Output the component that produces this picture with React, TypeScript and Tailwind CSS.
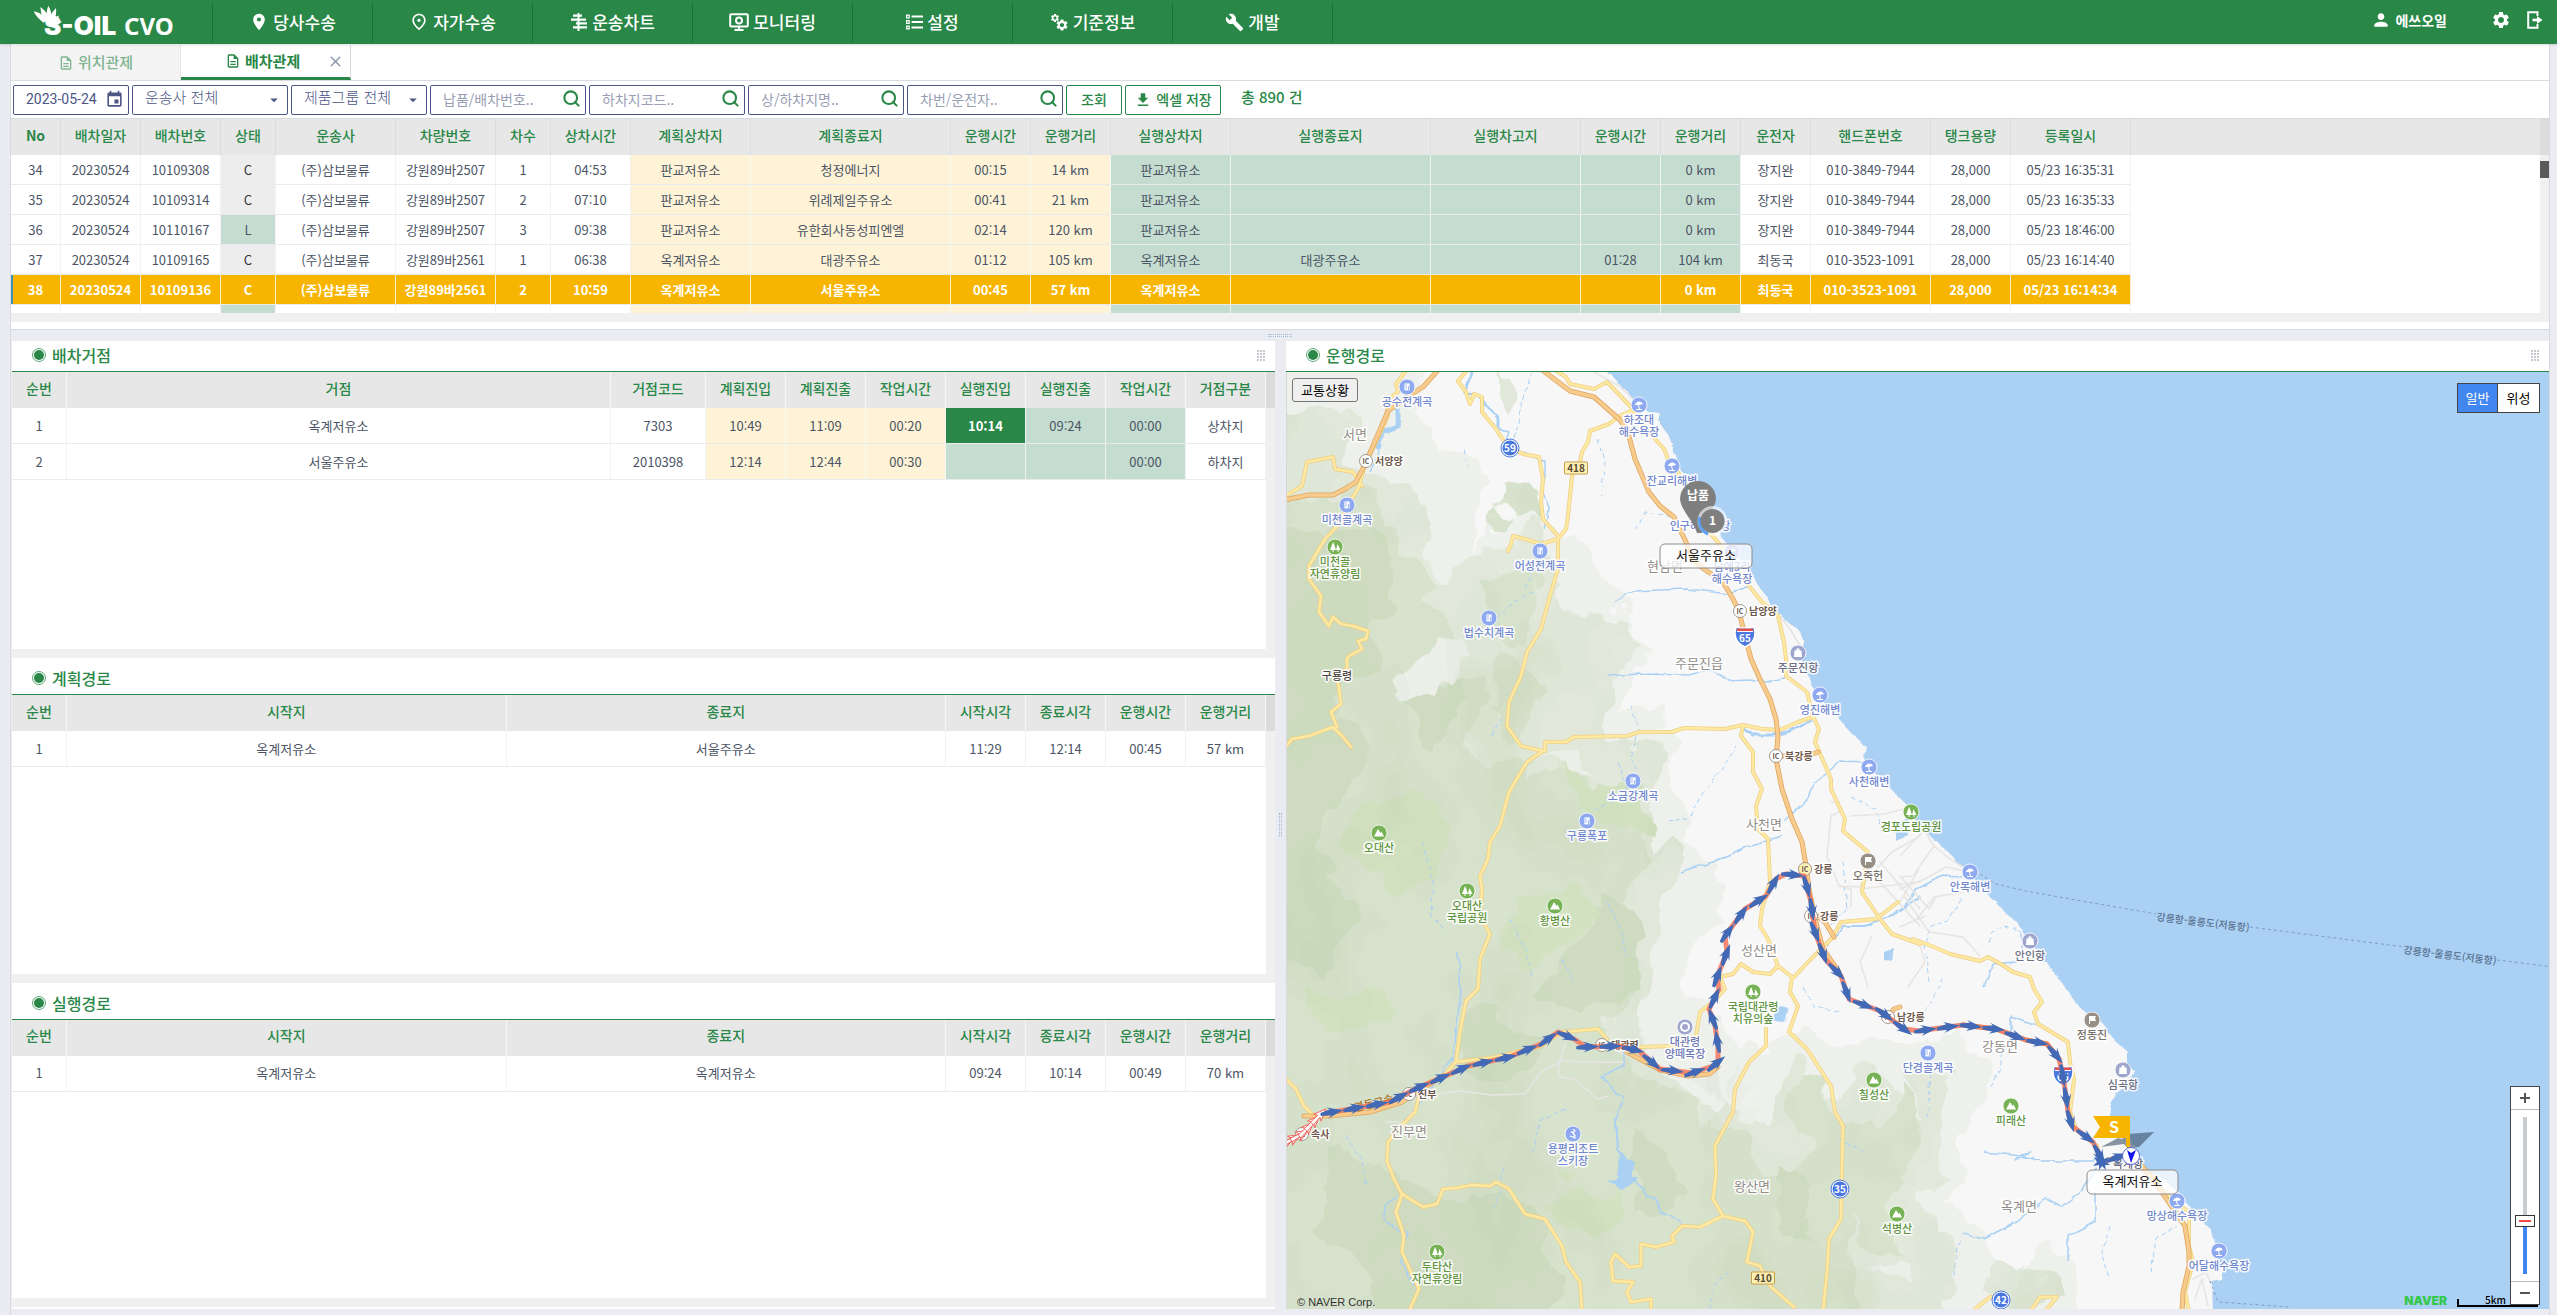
import React from "react";
import { Search, X } from "lucide-react";
import {
  MdArrowDropDown,
  MdBuild,
  MdEvent,
  MdFileDownload,
  MdOutlineDescription,
  MdOutlinePlace,
  MdPerson,
  MdPlace,
  MdSettings,
} from "react-icons/md";

/* ------------------------------------------------------------------ */
/* Header                                                             */
/* ------------------------------------------------------------------ */

function Logo() {
  const petals = [-150, -126, -102, -78, -54, -30];
  return (
    <a href="#" aria-label="S-OIL CVO" className="relative flex h-11 w-[212px] shrink-0 items-end pb-1 pl-11 text-white">
      <svg viewBox="0 0 36 26" className="absolute top-1 left-7 h-[26px] w-9" fill="#fff" aria-hidden="true">
        {petals.map((a, i) => (
          <path
            key={a}
            transform={`translate(19 21) rotate(${a + 168}) scale(${i > 3 ? 0.8 : 1})`}
            d="M-2 -4C-5 -7 -8 -10 -17 -9C-13 -5 -9 -3 -4 -1Z"
          />
        ))}
      </svg>
      <span className="font-['Inter'] text-[26px] leading-7 font-black">S-OIL</span>
      <span className="ml-2 font-['Noto_Sans'] text-[24px] leading-7 font-bold">CVO</span>
    </a>
  );
}

function ChartIcon() {
  return (
    <svg viewBox="0 0 18 18" className="size-[18px]" fill="none" stroke="currentColor" strokeWidth="2.2">
      <path d="M8.5 0v18" strokeWidth="2" />
      <path d="M3 2.6h9M1 6.6h9M6 10.4h11M3 14.4h8M6 6.6h10M8 14.4h9" />
    </svg>
  );
}

function MonitorIcon() {
  return (
    <svg viewBox="0 0 20 18" className="h-[18px] w-5" fill="none" stroke="currentColor" strokeWidth="2">
      <rect x="1.2" y="1.2" width="17.6" height="12.4" rx="1" />
      <circle cx="10" cy="7.4" r="3" />
      <path d="M5.5 17h9M10 13v4" />
    </svg>
  );
}

function ListIcon() {
  return (
    <svg viewBox="0 0 17 16" className="h-4 w-[17px]" fill="none" stroke="currentColor">
      <path d="M5.5 2.5H17M5.5 8H17M5.5 13.5H17" strokeWidth="2.2" />
      <path d="M.6 1.2h2.6v2.6H.6zM.6 6.7h2.6v2.6H.6zM.6 12.2h2.6v2.6H.6z" strokeWidth="1.2" />
    </svg>
  );
}

function GearsIcon() {
  return (
    <span className="relative block size-[19px]">
      <MdSettings className="absolute top-0 left-0 size-[10px]" />
      <MdSettings className="absolute right-0 bottom-0 size-[14px]" />
    </span>
  );
}

function ExitIcon() {
  return (
    <svg viewBox="0 0 16 18" className="h-[18px] w-4" fill="none" stroke="currentColor" strokeWidth="2">
      <path d="M10.5 5V1.2H1.2v15.6h9.3V13" />
      <path d="M5.5 9H11" strokeWidth="2.6" />
      <path d="M10 5v8l5.5-4z" fill="currentColor" stroke="none" />
    </svg>
  );
}

const menus = [
  { label: "당사수송", icon: <MdPlace className="size-5" /> },
  { label: "자가수송", icon: <MdOutlinePlace className="size-5" /> },
  { label: "운송차트", icon: <ChartIcon /> },
  { label: "모니터링", icon: <MonitorIcon /> },
  { label: "설정", icon: <ListIcon /> },
  { label: "기준정보", icon: <GearsIcon /> },
  { label: "개발", icon: <MdBuild className="size-[19px]" /> },
];

function Header() {
  return (
    <header className="z-10 flex h-11 shrink-0 items-center bg-[#298747] text-white shadow">
      <Logo />
      <nav className="flex h-[39px] border-l border-[#217039]">
        {menus.map((m) => (
          <a
            key={m.label}
            href="#"
            className="flex w-40 items-center justify-center gap-1 border-r border-[#217039] text-[17px] font-medium"
          >
            {m.icon}
            <span>{m.label}</span>
          </a>
        ))}
      </nav>
      <div className="ml-auto flex items-center pr-3.5 pb-1">
        <MdPerson className="size-5" />
        <span className="ml-1 text-[14px] font-bold">에쓰오일</span>
        <button type="button" aria-label="환경설정" className="ml-11">
          <MdSettings className="size-5" />
        </button>
        <button type="button" aria-label="로그아웃" className="ml-4">
          <ExitIcon />
        </button>
      </div>
    </header>
  );
}

/* ------------------------------------------------------------------ */
/* Tabs and search bar                                                */
/* ------------------------------------------------------------------ */

function Tabs() {
  return (
    <div className="flex h-9 shrink-0 border-b border-[#d9dbe0] text-[15px] font-medium">
      <button type="button" className="flex w-[170px] items-center justify-center gap-1 border-r border-[#e6e6e6] bg-[#f4f4f4] text-[#7fb591]">
        <MdOutlineDescription className="size-4" />
        위치관제
      </button>
      <div className="flex w-[170px] items-center border-r border-b-3 border-r-[#d9dbe0] border-b-[#298747] pr-1.5 pl-11">
        <button type="button" className="flex items-center gap-1 font-bold text-[#298747]">
          <MdOutlineDescription className="size-4" />
          배차관제
        </button>
        <button type="button" aria-label="닫기" className="ml-auto text-[#9298ad]">
          <X className="size-[17px]" strokeWidth={2.2} />
        </button>
      </div>
    </div>
  );
}

const boxed = "flex h-[30px] items-center rounded-[2px] border border-[#4b5685] bg-white";

function DropDown({ label, wide }: { label: string; wide?: boolean }) {
  return (
    <div className={`relative ${wide ? "w-[156px]" : "w-[136px]"} ${boxed}`}>
      <select aria-label={label} className="h-full w-full appearance-none bg-transparent pb-1 pl-3 text-[15px] font-light text-[#4b5685] outline-none">
        <option>{label}</option>
      </select>
      <MdArrowDropDown className="pointer-events-none absolute right-1 size-[18px] text-[#4b5685]" />
    </div>
  );
}

function SearchBox({ hint }: { hint: string }) {
  return (
    <div className={`w-[156px] ${boxed}`}>
      <input aria-label={hint} placeholder={hint} className="min-w-0 flex-1 pl-3 text-[14px] text-[#4b5685] outline-none placeholder:text-[#989eb4]" />
      <button type="button" aria-label="검색" className="pr-1 pb-0.5 text-[#298747]">
        <Search className="size-[19px]" strokeWidth={2.6} />
      </button>
    </div>
  );
}

function SearchBar() {
  const button = "flex h-[30px] items-center justify-center gap-1 rounded-[2px] border border-[#298747] text-[14px] font-medium text-[#298747]";
  return (
    <form className="flex h-[37px] shrink-0 items-center gap-[3px] pl-0.5" onSubmit={(e) => e.preventDefault()}>
      <div className={`w-[116px] justify-between pr-1 pl-3 ${boxed}`}>
        <input aria-label="배차일자" defaultValue="2023-05-24" className="w-[78px] font-['Roboto'] text-[14px] text-[#4b5685] outline-none" />
        <MdEvent className="size-[19px] shrink-0 text-[#4b5685]" />
      </div>
      <DropDown label="운송사 전체" wide />
      <DropDown label="제품그룹 전체" />
      <SearchBox hint="납품/배차번호.." />
      <SearchBox hint="하차지코드.." />
      <SearchBox hint="상/하차지명.." />
      <SearchBox hint="차번/운전자.." />
      <button type="submit" className={`w-14 ${button}`}>조회</button>
      <button type="button" className={`w-24 ${button}`}>
        <MdFileDownload className="size-[18px]" />
        엑셀 저장
      </button>
      <p className="pb-1 pl-[17px] text-[15px] font-medium text-[#298747]">총 890 건</p>
    </form>
  );
}

/* ------------------------------------------------------------------ */
/* Dispatch list                                                      */
/* ------------------------------------------------------------------ */

const dispatchColumns: [string, string][] = [
  ["No", "w-[50px]"],
  ["배차일자", "w-20"],
  ["배차번호", "w-20"],
  ["상태", "w-[55px]"],
  ["운송사", "w-[120px]"],
  ["차량번호", "w-[100px]"],
  ["차수", "w-[55px]"],
  ["상차시간", "w-20"],
  ["계획상차지", "w-[120px]"],
  ["계획종료지", "w-[200px]"],
  ["운행시간", "w-20"],
  ["운행거리", "w-20"],
  ["실행상차지", "w-[120px]"],
  ["실행종료지", "w-[200px]"],
  ["실행차고지", "w-[150px]"],
  ["운행시간", "w-20"],
  ["운행거리", "w-20"],
  ["운전자", "w-[70px]"],
  ["핸드폰번호", "w-[120px]"],
  ["탱크용량", "w-20"],
  ["등록일시", "w-[120px]"],
];

const dispatchRows: string[][] = [
  ["34", "20230524", "10109308", "C", "(주)삼보물류", "강원89바2507", "1", "04:53", "판교저유소", "청정에너지", "00:15", "14 km", "판교저유소", "", "", "", "0 km", "장지완", "010-3849-7944", "28,000", "05/23 16:35:31"],
  ["35", "20230524", "10109314", "C", "(주)삼보물류", "강원89바2507", "2", "07:10", "판교저유소", "위례제일주유소", "00:41", "21 km", "판교저유소", "", "", "", "0 km", "장지완", "010-3849-7944", "28,000", "05/23 16:35:33"],
  ["36", "20230524", "10110167", "L", "(주)삼보물류", "강원89바2507", "3", "09:38", "판교저유소", "유한회사동성피엔엘", "02:14", "120 km", "판교저유소", "", "", "", "0 km", "장지완", "010-3849-7944", "28,000", "05/23 18:46:00"],
  ["37", "20230524", "10109165", "C", "(주)삼보물류", "강원89바2561", "1", "06:38", "옥계저유소", "대광주유소", "01:12", "105 km", "옥계저유소", "대광주유소", "", "01:28", "104 km", "최동국", "010-3523-1091", "28,000", "05/23 16:14:40"],
  ["38", "20230524", "10109136", "C", "(주)삼보물류", "강원89바2561", "2", "10:59", "옥계저유소", "서울주유소", "00:45", "57 km", "옥계저유소", "", "", "", "0 km", "최동국", "010-3523-1091", "28,000", "05/23 16:14:34"],
  ["", "", "", "L", "", "", "", "", "", "", "", "", "", "", "", "", "", "", "", "", ""],
];

function dispatchCell(col: number, value: string, selected: boolean) {
  if (selected) return "border-white/80 bg-[#f8b500] text-white font-bold";
  if (col === 3) return value === "L" ? "border-[#f4f4f4] bg-[#c5dcd0]" : "border-[#f4f4f4] bg-[#ededed] text-[#333]";
  if (col >= 8 && col <= 11) return "border-[#f7f7f4] bg-[#fef3d6]";
  if (col >= 12 && col <= 16) return "border-[#eef3f0] bg-[#c5dcd0]";
  return "border-[#f1f2f4]";
}

function DispatchTable() {
  return (
    <div className="flex h-[204px] shrink-0 border-t border-[#d9dbe0]">
      <div className="flex min-w-0 flex-1 flex-col">
        <div className="relative min-h-0 flex-1 overflow-hidden">
          <div className="absolute inset-x-0 top-0 h-9 bg-[#e7e7e7]" />
          <table className="relative w-[2120px] table-fixed border-separate border-spacing-0 text-center text-[13px] text-[#4c5565]">
            <thead>
              <tr>
                {dispatchColumns.map(([name, width], i) => (
                  <th key={i} className={`${width} h-9 border-r border-[#d9dce0] bg-[#e7e7e7] pb-1 text-[14px] text-[#298747] ${i === 0 ? "font-bold" : "font-medium"}`}>
                    {name}
                  </th>
                ))}
              </tr>
            </thead>
            <tbody>
              {dispatchRows.map((row, r) => (
                <tr key={r}>
                  {row.map((value, c) => (
                    <td
                      key={c}
                      className={`h-[30px] overflow-hidden border-r border-b border-b-[#e9eaed] whitespace-nowrap ${dispatchCell(c, value, r === 4)} ${r === 4 && c === 0 ? "shadow-[inset_2px_0_0_#3f94b4]" : ""}`}
                    >
                      {r === 5 ? "" : value}
                    </td>
                  ))}
                </tr>
              ))}
            </tbody>
          </table>
        </div>
        <div className="h-[9px] shrink-0 bg-[#f0f0f0]" />
      </div>
      <div className="flex w-[9px] shrink-0 flex-col bg-[#f0f0f0]">
        <div className="h-9 bg-[#dcdcdc]" />
        <div className="mt-1.5 h-[17px] bg-[#5a5a5a]" />
      </div>
    </div>
  );
}

/* ------------------------------------------------------------------ */
/* Lower-left panels                                                  */
/* ------------------------------------------------------------------ */

type Tone = "plan" | "real" | "hot" | "";

interface Column {
  name: string;
  width: string;
  tone?: Tone;
}

const tones: Record<Tone, string> = {
  plan: "border-r-[#f7f7f4] bg-[#fef3d6]",
  real: "border-r-[#eef3f0] bg-[#c5dcd0]",
  hot: "border-r-[#eef3f0] bg-[#298747] text-white font-bold",
  "": "border-r-[#f1f2f4]",
};

function Bullet() {
  return (
    <span className="flex size-[14px] items-center justify-center rounded-full border border-[#5fa577]">
      <span className="size-[10px] rounded-full bg-[#298747]" />
    </span>
  );
}

function Grip() {
  return (
    <svg viewBox="0 0 8 11" className="h-[11px] w-2" fill="#c6c8ce" aria-hidden="true">
      {[0, 3, 6, 9].map((y) => [0, 3, 6].map((x) => <rect key={`${x}-${y}`} x={x} y={y} width="2" height="2" />))}
    </svg>
  );
}

function PanelTitle({ title, tall, grip }: { title: string; tall?: boolean; grip?: boolean }) {
  return (
    <div className={`flex shrink-0 items-center justify-between border-b border-[#298747] pr-2.5 pl-5 ${tall ? "h-[37px] pt-1" : "h-[31px] pb-0.5"}`}>
      <h2 className="flex items-center gap-1.5 text-[16px] leading-6 font-medium text-[#298747]">
        <Bullet />
        {title}
      </h2>
      {grip && <Grip />}
    </div>
  );
}

function GridPanel({ title, columns, rows, first }: { title: string; columns: Column[]; rows: string[][]; first?: boolean }) {
  return (
    <section className={`flex min-h-0 flex-col bg-white ${first ? "flex-[317]" : "flex-[324]"}`}>
      <PanelTitle title={title} tall={!first} grip={first} />
      <div className="flex min-h-0 flex-1">
        <div className="flex min-w-0 flex-1 flex-col">
          <div className="min-h-0 flex-1 overflow-hidden">
            <table className="w-full table-fixed border-separate border-spacing-0 text-center text-[13px] text-[#4c5565]">
              <thead>
                <tr>
                  {columns.map((c, i) => (
                    <th key={i} className={`${c.width} h-9 border-r border-[#f6f6f6] bg-[#e7e7e7] pb-1 text-[14px] font-medium text-[#298747]`}>
                      {c.name}
                    </th>
                  ))}
                </tr>
              </thead>
              <tbody>
                {rows.map((row, r) => (
                  <tr key={r}>
                    {row.map((value, c) => (
                      <td key={c} className={`h-9 border-r border-b border-b-[#e9eaed] ${value === "10:14" && columns[c].tone ? tones.hot : tones[columns[c].tone ?? ""]}`}>
                        {value}
                      </td>
                    ))}
                  </tr>
                ))}
              </tbody>
            </table>
          </div>
          <div className="h-[9px] shrink-0 bg-[#f0f0f0]" />
        </div>
        <div className="w-[9px] shrink-0 bg-[#f0f0f0]">
          <div className="h-9 bg-[#dcdcdc]" />
        </div>
      </div>
    </section>
  );
}

const stopColumns: Column[] = [
  { name: "순번", width: "w-[55px]" },
  { name: "거점", width: "" },
  { name: "거점코드", width: "w-[95px]" },
  { name: "계획진입", width: "w-20", tone: "plan" },
  { name: "계획진출", width: "w-20", tone: "plan" },
  { name: "작업시간", width: "w-20", tone: "plan" },
  { name: "실행진입", width: "w-20", tone: "real" },
  { name: "실행진출", width: "w-20", tone: "real" },
  { name: "작업시간", width: "w-20", tone: "real" },
  { name: "거점구분", width: "w-20" },
];

const stopRows = [
  ["1", "옥계저유소", "7303", "10:49", "11:09", "00:20", "10:14", "09:24", "00:00", "상차지"],
  ["2", "서울주유소", "2010398", "12:14", "12:44", "00:30", "", "", "00:00", "하차지"],
];

const legColumns: Column[] = [
  { name: "순번", width: "w-[55px]" },
  { name: "시작지", width: "" },
  { name: "종료지", width: "" },
  { name: "시작시각", width: "w-20" },
  { name: "종료시각", width: "w-20" },
  { name: "운행시간", width: "w-20" },
  { name: "운행거리", width: "w-20" },
];

/* ------------------------------------------------------------------ */
/* Map                                                                */
/* ------------------------------------------------------------------ */

type Pt = [number, number];

/* Map geometry is stored per survey sheet; each sheet has its own origin and scale. */
const sheets: Record<string, { ox: number; oy: number; sx: number }> = {
  A: { ox: -7, oy: -43, sx: 2.45 },
  B: { ox: -7, oy: 277, sx: 2.45 },
  C: { ox: -7, oy: 607, sx: 2.45 },
  D: { ox: 613, oy: 277, sx: 2.3866 },
  E: { ox: 613, oy: 607, sx: 2.3866 },
};

function at(sheet: string, x: number, y: number): Pt {
  const s = sheets[sheet];
  return [Math.round(x / s.sx + s.ox), Math.round(y / 3 + s.oy)];
}

function trace(source: string): Pt[] {
  let sheet = "A";
  const out: Pt[] = [];
  for (const token of source.trim().split(/\s+/)) {
    if (sheets[token]) sheet = token;
    else {
      const [x, y] = token.split(",").map(Number);
      out.push(at(sheet, x, y));
    }
  }
  return out;
}

const flat = (points: Pt[]) => points.map((p) => p.join(",")).join(" ");
const line = (source: string) => flat(trace(source));

const sea = `${line(
  "A 795,120 835,170 865,210 905,245 930,250 925,275 945,310 960,350 975,400 985,430 1010,450 1040,500 1060,540 1075,590 1080,620 1110,660 1140,710 1165,760 1195,810 1215,845 1250,885 1270,900 1285,935 1280,970 B 1280,60 1300,100 1340,170 1370,210 1405,255 1435,295 1432,330 1450,360 1490,415 1535,470 D 25,490 60,545 110,605 150,655 190,710 225,755 260,800 290,840 310,880 340,930 375,980 390,1015 E 400,40 440,95 480,130 510,180 545,220 545,255 560,280 540,325 515,345 500,385 500,410 525,440 560,500 570,540 590,575 640,610 680,660 700,710 735,740 755,790 750,830 770,870 765,900 745,905 750,1100",
)} 1400,1000 1400,-100 300,-100`;

interface Terrain {
  fill: string;
  areas: string[];
}

const foothills: Terrain = {
  fill: "#eef1eb",
  areas: [
    "A -100,0 330,60 370,260 400,370 500,400 520,460 480,640 560,560 640,640 740,640 800,760 890,930 920,960 B 920,0 860,60 820,150 880,170 930,220 950,330 970,420 1030,500 1000,600 1060,640 1080,760 1050,850 1020,1000 C 1100,180 1150,160 1230,200 1280,170 1380,210 1568,180 E 130,170 140,260 200,300 220,370 170,470 180,560 110,640 180,760 240,850 260,880 330,800 400,820 430,900 440,1100 -700,1100 C -100,1100",
  ],
};

const highlands: Terrain[] = [
  {
    fill: "#e3eadd",
    areas: [
      "A -100,250 130,200 190,250 150,400 250,440 350,500 370,640 420,760 440,680 500,640 600,600 660,780 840,850 900,960 B 800,60 790,200 870,250 930,320 950,400 880,500 900,620 960,560 1000,640 1000,760 930,860 900,1000 C 860,100 900,240 950,300 1040,400 1100,330 1180,420 1250,260 1320,380 1420,300 1568,420 E 0,300 100,300 90,480 130,560 60,640 100,780 130,880 100,1100 C -100,1100",
      "A 530,130 560,240 600,180 570,130",
      "E 240,850 330,870 380,940 300,1000 200,960",
    ],
  },
  {
    fill: "#d8e3cd",
    areas: [
      "A -100,560 160,480 250,500 240,600 340,640 400,760 330,830 400,900 B 400,80 500,100 460,300 640,340 620,420 760,330 880,420 850,520 900,640 830,780 860,900 850,1000 C 820,120 830,240 1000,360 1000,420 1130,440 1150,560 1250,620 1330,420 1400,700 1420,1100 -100,1100",
      "B 540,0 600,40 620,180 560,260 500,200",
      "A 560,480 620,520 600,600 540,580",
      "C 1250,330 1350,300 1420,480 1500,560 1540,800 1430,760 1300,560",
      "E 0,330 30,380 20,600 -60,700 -100,500",
      "A 500,760 620,700 640,860 600,960 520,900",
    ],
  },
  {
    fill: "#cfdcc1",
    areas: [
      "A -100,640 150,560 240,640 260,800 230,960 B 150,120 200,220 190,350 110,480 100,620 190,760 120,960 -100,900",
      "B 300,80 380,30 430,160 400,340 320,260",
      "B 780,740 880,860 860,1000 C 740,80 640,60 700,-40",
      "C 100,520 260,560 380,640 560,640 660,760 700,1100 300,1100 240,900 120,760",
      "C 420,80 560,120 640,230 560,300 440,260",
      "C 860,480 960,520 1000,620 940,760 860,700 880,600",
      "C 1240,560 1300,640 1290,800 1210,760",
    ],
  },
  {
    fill: "#d3e2c1",
    areas: [
      "B 200,460 340,420 440,560 400,700 250,720 180,600",
      "B 560,760 700,690 760,820 640,960 540,900",
      "C 60,40 260,20 280,140 100,180",
      "B 720,340 860,380 900,520 760,480",
      "C 700,560 820,640 760,780 640,700",
    ],
  },
  {
    fill: "#eef1ec",
    areas: [
      "B 280,40 360,0 440,10 380,120 300,130",
      "B 660,320 720,310 800,340 720,350",
      "C 1130,240 1180,300 1150,420 1110,380",
      "C 1000,300 1080,280 1100,330 1040,350",
      "C 1460,830 1540,820 1530,900 1470,880",
    ],
  },
];

const highways = [
  "A 640,120 710,185 770,205 830,270 850,300 870,390 905,490 930,530 965,565 995,640 1010,690 1040,720 1085,760 1110,810 1125,845 1140,920 1155,990 B 1175,90 1200,150 1215,210 1220,260 1215,330 1230,420 1255,510 1280,580 1288,650 1295,720 1310,810 1330,900 1370,970",
  "A 390,120 350,175 310,205 265,245 235,330 210,400 185,460 160,480 130,497 70,497 10,512",
  "E 560,540 600,590 640,665 680,740 690,820 690,860 675,940 672,1000",
  "C 60,412 120,410 220,400 300,370 360,320 400,290",
  "C 850,220 930,272 1000,290 1050,285 1072,265",
  "B 1315,800 1335,820 1358,865",
  "B 1225,322 1290,320 1318,308",
  "C 1490,115 1505,90 1520,85",
  "E 150,137 230,150 300,182 350,195 380,240",
];

const roads = [
  "A 310,120 285,165 290,190 260,215 265,260 235,340 210,400 190,480 165,530 150,580 110,630 70,710 70,750 100,800 95,850 120,890 130,865 150,885 180,890 215,905 210,930 190,935 200,960 170,980 B 165,30 165,60 140,80 145,120 150,165 125,190 140,235",
  "B 10,300 30,270 70,260 130,235 155,265 175,295",
  "A 460,120 435,155 455,190 465,225 475,195 495,205 495,250 530,300 555,350 595,375 635,385 645,450 640,520 645,570 680,620 680,720 665,790 640,900 605,970 B 590,80 560,160 555,230 590,290 645,305 605,340 560,430 540,530 515,580 510,630 490,680 495,720 490,800 515,855 490,930 485,1020 C 455,65 440,160 430,250",
  "A 670,120 700,145 710,165 770,180 800,160 860,235 905,310 940,360 950,390 1000,470 1040,590 1080,650 1130,740 1180,820 1220,860 1235,940 1240,990 B 1240,80 1290,130 1305,200 1320,240 1310,280 1350,390 1350,420 1385,510 1380,545 1440,610 1425,730 1470,810 1500,855 1568,885 D 30,870 80,895 120,915 190,935 210,925 240,945 270,970 310,985 320,1020 E 340,70 320,100 330,135 400,190 405,250 415,300 405,400 420,450 470,500 480,545",
  "A 860,245 830,260 805,285 760,305 755,340 740,370 735,400 715,440 710,500 705,560 700,600 680,630 640,645 600,630 570,620 565,645 558,665",
  "A 18,498 55,470 65,400 130,385 135,420 180,430 200,470",
  "B 650,305 650,280 700,280 720,265 850,260 880,248 960,248 990,238 1090,240 1135,228 1180,240 1225,243 1270,220 1305,205",
  "B 1135,228 1130,260 1160,310 1160,370 1180,420 1165,470 1170,540 1195,570 1200,700 1180,780 1175,830 1195,870 1220,950 1255,985 C 1250,40 1270,80 1248,160 1290,210 1350,320 1360,400 1380,440 1378,560 1375,720 1345,780 1340,880 1330,1000",
  "B 1075,985 1110,975 1130,945 1160,970 1200,975 1220,950",
  "B 1515,760 1460,810 1375,820 1355,865 1300,930 1260,985",
  "C 1190,150 1190,200 1150,250 1115,330 1110,400 1065,500 1068,590 1060,660 1085,710 1030,745 985,740 960,770 965,790 920,805 885,795 885,860 855,865 820,825 810,850 815,905 865,910 850,940 860,970 910,960 910,1000",
  "C 1085,710 1140,725 1160,760 1145,850 1175,860 1200,920 1260,985",
  "C 10,295 40,330 60,380 85,415",
  "C 355,315 400,290 430,250 530,235 640,200 690,160 780,150 800,180",
  "C 880,205 970,200 1020,170 1030,100 1060,70 1090,30 1080,0",
  "C 345,330 330,400 290,450 265,490 262,545 280,600 300,645 285,700 305,770 300,820 320,880 340,930 318,990",
  "C 300,645 350,685 385,675 400,630 430,628 470,618 515,620 530,610 560,630 600,705 650,720 690,800 700,850 735,910 740,1000",
  "E 180,990 215,955 245,960",
  "E 315,990 335,955 375,955 350,990",
  "E 570,560 650,660 690,700 690,800 700,850 680,940 690,1000",
];

const lanes = [
  "C 390,345 440,335 520,348 600,345 640,280 690,245 760,250 840,250",
  "C 700,190 680,260 685,295 720,300 780,360 805,350",
  "C 320,400 310,430 260,430",
  "B 1350,460 1370,460 1370,490 1350,500 1340,620 1370,710 1400,720 1400,770",
  "B 1400,500 1480,495 1530,480",
  "B 1370,710 1420,715 1500,610 1568,560",
  "B 1440,660 1568,830",
  "B 1470,640 1568,780",
  "B 1420,720 1568,700",
  "D 60,545 80,590 120,630 150,655",
  "D 0,620 60,540",
  "D 0,685 30,680 80,590",
  "D 0,720 60,690 110,655 155,665",
  "D 0,680 70,780 85,745",
  "D 0,760 45,660",
  "D 10,740 70,850 150,865 190,920",
  "D 40,810 80,745 150,730",
  "D 0,835 60,800",
  "D 45,880 60,940 20,1015",
  "A 770,130 830,170 870,215",
  "A 1225,860 1250,900 1280,960",
  "E 700,900 730,880 740,910",
  "E 705,960 720,900 735,980",
  "B 1440,1015 1420,940 1450,860",
];

const rivers = [
  "A 470,128 450,190 490,200 510,240 535,265 535,295 560,310 548,350",
  "A 290,200 285,240 295,290 250,310 240,380 220,430",
  "A 600,370 650,400 650,440 645,500 657,530 655,565 648,600",
  "B 1060,65 1100,92 1150,90 1190,98 1240,85",
  "B 800,82 880,76 1000,78 1060,62",
  "B 1235,520 1290,450 1310,400 1340,370 1370,335 1440,338",
  "C 435,-80 440,60 425,240 400,280 330,390 270,480",
  "C 290,650 255,680 255,720 290,755 310,760 300,850 325,920",
  "C 840,210 840,260 790,290 815,330 840,360 820,430 825,510 850,545",
  "C 870,600 900,650 920,660 930,700 985,730",
  "D 0,790 40,720 100,680 150,685",
  "D 200,1015 220,945 275,940 290,900 292,850",
  "E 200,520 290,530 340,545 460,545 480,520",
  "E 290,530 310,515 275,540 320,535",
  "E 150,765 200,780 280,730 345,660 385,685 430,640 470,560",
  "E 400,850 400,770 465,730 465,640",
  "A 820,820 860,785 1000,780 1100,795 1150,770",
  "E 330,140 265,110 265,220",
  "E 760,970 745,905",
  "B 980,670 1060,640 1130,600 1230,560",
];

const streams = [
  "A 620,130 590,230 575,330",
  "A 780,330 795,400 790,500",
  "A 450,360 460,410",
  "A 870,600 900,550 960,560",
  "A 600,780 615,740 590,700",
  "A 620,790 560,830 520,880",
  "B 1120,290 1060,400 1030,440 1000,510 950,520",
  "B 860,170 880,240 860,330 880,370",
  "B 830,340 850,430 790,470 760,500",
  "B 350,580 375,700 370,800 410,850",
  "B 800,760 830,830 850,920",
  "B 560,810 600,900 620,980",
  "B 1400,440 1460,480 1480,560",
  "B 1380,640 1390,780 1350,830",
  "C 700,390 640,420 620,520",
  "C 160,470 200,540 210,620",
  "C 1280,30 1310,80 1370,100",
  "C 1370,480 1430,520",
  "D 70,1000 60,900 75,830 110,820 150,740",
  "D 210,880 220,850 250,830 290,845",
  "E 60,100 90,30 100,0",
  "E 240,220 240,260 215,330",
  "E 75,260 70,400 60,430",
  "E 130,890 135,800 150,760",
  "E 500,740 480,830 500,900",
  "E 600,880 610,780 660,740",
  "C 550,560 540,640 520,700",
  "C 1100,880 1060,920 1050,1000",
  "B 520,260 540,210",
  "B 690,930 720,1000",
];

const route = trace(
  "C 100,405 200,385 270,370 330,330 400,295 460,260 560,235 640,195 680,160 720,180 750,205 830,200 880,215 930,270 1010,283 1060,262 1072,250 1072,200 1065,140 1050,90 1075,30 B 1070,985 1095,910 1090,860 1140,780 1190,740 1215,690 1240,675 1285,680 1300,760 1310,850 1335,930 1375,980 C 1395,60 1470,95 1530,150 1568,155 E 60,152 150,137 230,150 300,182 350,195 380,240 390,290 395,350 400,400 410,440 460,490 485,550 520,535 545,528",
);

/* Places direction arrows at even distances along a path. */
function arrowsAlong(points: Pt[], step: number) {
  const out: { x: number; y: number; a: number }[] = [];
  let rest = step / 2;
  for (let i = 1; i < points.length; i++) {
    const [x0, y0] = points[i - 1];
    const [x1, y1] = points[i];
    const len = Math.hypot(x1 - x0, y1 - y0);
    const a = (Math.atan2(y1 - y0, x1 - x0) * 180) / Math.PI;
    while (rest <= len) {
      out.push({ x: x0 + ((x1 - x0) * rest) / len, y: y0 + ((y1 - y0) * rest) / len, a });
      rest += step;
    }
    rest -= len;
  }
  return out;
}

const arrows = arrowsAlong(route, 23);
const approach = arrowsAlong(trace("C 0,500 55,465 100,405"), 9);

type PoiKind = "valley" | "beach" | "tree" | "mountain" | "port" | "flag" | "farm" | "ski";

const poiStyle: Record<PoiKind, { disc: string; text: string; glyph: React.ReactNode }> = {
  valley: { disc: "#8ea9f0", text: "#7288cf", glyph: <path d="M-3-4h6v8h-6zM-4 4h8M-1-3v5M1.5-1v4" fill="#fff" stroke="#8ea9f0" strokeWidth=".8" /> },
  beach: { disc: "#8ea9f0", text: "#7288cf", glyph: <path d="M-4 0C-3-4 2-5 4-1L0 0 1 4H3V5H-3V4H0L-1 0Z" fill="#fff" /> },
  tree: { disc: "#77b254", text: "#5f9440", glyph: <path d="M-2-5L-5 3H-2.5V5H-1.5V3H1L-1-3ZM2.500-3L1 3H2.500V5H3.500V3H5.500Z" fill="#fff" /> },
  mountain: { disc: "#77b254", text: "#5f9440", glyph: <path d="M-5 3.500L-1-4 1.500 0 2.500-1.500 5 3.500Z" fill="#fff" /> },
  port: { disc: "#9ea6cd", text: "#6d6f85", glyph: <path d="M-1.500-4.500h3v2h2l.5 6.500h-8l.5-6.500h2z" fill="#fff" /> },
  flag: { disc: "#978f86", text: "#77706a", glyph: <path d="M-3-4h1v8h-1zM-2-4H4L3-1.500 4 1H-2z" fill="#fff" /> },
  farm: { disc: "#9ea6cd", text: "#6d77b5", glyph: <><circle r="5" fill="#fff" /><circle r="3" fill="#9ea6cd" /></> },
  ski: { disc: "#8ea9f0", text: "#7288cf", glyph: <path d="M0-4.500l2 1-2 3 2 2-1 3M-3 2l6 2M-2-2l3 .5" fill="none" stroke="#fff" strokeWidth="1.300" /> },
};

const pois: [PoiKind, string, number, number, string[]][] = [
  ["valley", "A", 311, 175, ["공수전계곡"]],
  ["beach", "A", 880, 227, ["하조대", "해수욕장"]],
  ["beach", "A", 960, 410, ["잔교리해변"]],
  ["valley", "A", 165, 528, ["미천골계곡"]],
  ["tree", "A", 135, 655, ["미천골", "자연휴양림"]],
  ["valley", "A", 636, 665, ["어성전계곡"]],
  ["valley", "A", 513, 868, ["법수치계곡"]],
  ["beach", "A", 1030, 545, ["인구해수욕장"]],
  ["beach", "A", 1108, 670, ["남애3리", "해수욕장"]],
  ["port", "B", 1270, 12, ["주문진항"]],
  ["beach", "B", 1323, 137, ["영진해변"]],
  ["beach", "B", 1442, 353, ["사천해변"]],
  ["tree", "B", 1547, 488, ["경포도립공원"]],
  ["flag", "B", 1440, 635, ["오죽헌"]],
  ["valley", "B", 865, 395, ["소금강계곡"]],
  ["valley", "B", 752, 517, ["구룡폭포"]],
  ["mountain", "B", 243, 553, ["오대산"]],
  ["tree", "B", 459, 727, ["오대산", "국립공원"]],
  ["mountain", "B", 674, 772, ["황병산"]],
  ["tree", "C", 1158, 40, ["국립대관령", "치유의숲"]],
  ["farm", "C", 993, 143, ["대관령", "양떼목장"]],
  ["ski", "C", 717, 466, ["용평리조트", "스키장"]],
  ["tree", "C", 385, 818, ["두타산", "자연휴양림"]],
  ["mountain", "C", 1456, 304, ["칠성산"]],
  ["mountain", "C", 1511, 706, ["석병산"]],
  ["beach", "D", 167, 670, ["안목해변"]],
  ["port", "D", 311, 875, ["안인항"]],
  ["valley", "E", 68, 222, ["단경골계곡"]],
  ["flag", "E", 458, 123, ["정동진"]],
  ["port", "E", 533, 272, ["심곡항"]],
  ["mountain", "E", 265, 380, ["피래산"]],
  ["beach", "E", 661, 667, ["망상해수욕장"]],
  ["beach", "E", 762, 815, ["어달해수욕장"]],
];

const interchanges: [string, number, number, string][] = [
  ["A", 210, 396, "서양양"],
  ["A", 1126, 845, "남양양"],
  ["B", 1215, 322, "북강릉"],
  ["B", 1286, 660, "강릉"],
  ["B", 1302, 800, "강릉"],
  ["C", 1490, 115, "남강릉"],
  ["C", 315, 345, "진부"],
  ["C", 790, 197, "대관령"],
  ["C", 55, 465, "속사"],
];

const districts: [string, number, number, string][] = [
  ["A", 183, 316, "서면"],
  ["A", 943, 712, "현남면"],
  ["B", 1027, 43, "주문진읍"],
  ["B", 1186, 524, "사천면"],
  ["B", 1173, 902, "성산면"],
  ["C", 317, 456, "진부면"],
  ["C", 1156, 620, "왕산면"],
  ["E", 238, 200, "강동면"],
  ["E", 284, 680, "옥계면"],
];

function place([x, y]: Pt) {
  return `translate(${x} ${y})`;
}

const halo = "[paint-order:stroke] stroke-white/90 stroke-[3px]";

function RoundShield({ pos, no }: { pos: Pt; no: string }) {
  return (
    <g transform={place(pos)}>
      <circle r="9" fill="#fff" stroke="#4a78e0" strokeWidth="1" />
      <circle r="7.500" fill="#4a78e0" />
      <text y="4" textAnchor="middle" fill="#fff" className="text-[10px] font-bold">{no}</text>
    </g>
  );
}

function BoxShield({ pos, no }: { pos: Pt; no: string }) {
  return (
    <g transform={place(pos)}>
      <rect x="-11.500" y="-6" width="23" height="12" rx="1" fill="#fff0b5" stroke="#c9a04a" />
      <text y="4" textAnchor="middle" fill="#574a33" className="text-[10px] font-bold">{no}</text>
    </g>
  );
}

function HighwayShield({ pos }: { pos: Pt }) {
  return (
    <g transform={place(pos)}>
      <path d="M-9-9L-5-8H5L9-9 10-4C10 5 6 8 0 11-6 8-10 5-10-4Z" fill="#4a78e0" stroke="#fff" strokeWidth="1.500" />
      <path d="M-8-7.500h16v3h-16z" fill="#e2504e" />
      <path d="M-8-4.500h16" stroke="#fff" />
      <text y="6" textAnchor="middle" fill="#fff" className="text-[10px] font-bold">65</text>
    </g>
  );
}

function PlaceBalloon({ x, y, w, label }: { x: number; y: number; w: number; label: string }) {
  return (
    <g>
      <rect x={x} y={y} width={w} height="24" rx="5" fill="#fff" fillOpacity=".75" stroke="#8c8c8c" />
      <text x={x + w / 2} y={y + 16} textAnchor="middle" fill="#111" className="text-[13px]">{label}</text>
    </g>
  );
}

function MapDrawing() {
  return (
    <svg viewBox="0 0 1263 937" preserveAspectRatio="xMinYMin slice" className="absolute inset-0 size-full" role="img" aria-label="운행경로 지도">
      <defs>
        <filter id="contour" x="-10%" y="-10%" width="120%" height="120%">
          <feTurbulence type="fractalNoise" baseFrequency="0.014" numOctaves="4" seed="7" />
          <feDisplacementMap in="SourceGraphic" scale="70" xChannelSelector="R" yChannelSelector="G" />
        </filter>
        <filter id="ridges" x="-10%" y="-10%" width="120%" height="120%" colorInterpolationFilters="sRGB">
          <feTurbulence type="fractalNoise" baseFrequency="0.014" numOctaves="4" seed="7" result="noise" />
          <feDisplacementMap in="SourceGraphic" in2="noise" scale="70" xChannelSelector="R" yChannelSelector="G" result="land" />
          <feTurbulence type="fractalNoise" baseFrequency="0.012 0.008" numOctaves="3" seed="21" />
          <feColorMatrix values="0 0 0 0 .73  0 0 0 0 .8  0 0 0 0 .67  1 0 0 0 0" />
          <feComponentTransfer result="bands">
            <feFuncA type="discrete" tableValues="0 0 0 0 0 0 .06 .06 .13 .13 .2 .28 .28 .2 .2 .1" />
          </feComponentTransfer>
          <feComposite in="bands" in2="land" operator="atop" />
        </filter>
        <filter id="shore" x="-5%" y="-5%" width="110%" height="110%">
          <feTurbulence type="fractalNoise" baseFrequency="0.09" numOctaves="2" seed="3" />
          <feDisplacementMap in="SourceGraphic" scale="5" xChannelSelector="R" yChannelSelector="G" />
        </filter>
      </defs>
      <rect width="1263" height="937" fill="#f7f7f7" />
      <g filter="url(#contour)">
        {foothills.areas.map((a) => <polygon key={a} points={line(a)} fill={foothills.fill} />)}
      </g>
      <g filter="url(#ridges)">
        {highlands.map((layer) =>
          layer.areas.map((a, i) => <polygon key={layer.fill + i} points={line(a)} fill={layer.fill} />),
        )}
      </g>
      <g filter="url(#shore)">
        <polygon points={sea} fill="#aad0f4" />
        <polygon points={line("C 830,530 850,540 870,550 860,590 880,590 870,610 840,630 800,605 825,600")} fill="#aad0f4" />
        <polygon points={line("C 1220,80 1245,90 1235,130 1205,120")} fill="#aad0f4" />
        <polygon points={line("B 1510,520 1540,505 1535,560 1510,575")} fill="#aad0f4" />
        <polygon points={line("B 1480,910 1505,900 1500,930 1480,935")} fill="#aad0f4" />
        <g fill="none" stroke="#aad0f4" strokeLinejoin="round">
          {rivers.map((r) => <polyline key={r} points={line(r)} strokeWidth="1.500" />)}
          {streams.map((r) => <polyline key={r} points={line(r)} strokeWidth="1" strokeDasharray="5 3" />)}
          <polyline points={line("A 470,128 450,190 490,200 510,240 535,265 535,295")} strokeWidth="3" />
          <polyline points={line("A 290,240 290,290 250,310 240,360")} strokeWidth="5" />
          <polyline points={line("B 1135,235 1160,258 1210,258 1250,245 1300,212")} strokeWidth="3" />
          <polyline points={line("C 820,430 825,510 845,545")} strokeWidth="2" />
          <polyline points={line("B 1340,890 1380,830 1430,830 1500,800 1568,740")} strokeWidth="2" />
        </g>
      </g>
      <g fill="none" strokeLinejoin="round" strokeLinecap="round">
        {lanes.map((r) => <polyline key={r} points={line(r)} stroke="#e6e5e3" strokeWidth="1.500" />)}
        {roads.map((r) => <polyline key={r} points={line(r)} stroke="#efcf83" strokeWidth="4" />)}
        {roads.map((r) => <polyline key={r} points={line(r)} stroke="#fee9a3" strokeWidth="2.500" />)}
        {highways.map((r) => <polyline key={r} points={line(r)} stroke="#dfa45e" strokeWidth="5" />)}
        {highways.map((r) => <polyline key={r} points={line(r)} stroke="#f6cb8c" strokeWidth="3.500" />)}
        <g stroke="#7e9cc4" strokeDasharray="3 3" strokeLinecap="butt">
          <polyline points={line("D 190,675 230,705 300,725 420,752 610,795")} />
          <polyline points={line("D 835,835 1205,895")} />
          <polyline points={line("D 1424,932 1560,954")} />
          <polyline points={line("E 740,905 760,970 930,985")} />
        </g>
      </g>

      <g textAnchor="middle" strokeLinejoin="round">
        {districts.map(([s, x, y, name]) => (
          <text key={name} transform={place(at(s, x, y))} y="5" fill="#918d89" className={`text-[13px] ${halo}`}>{name}</text>
        ))}
        {pois.map(([kind, s, x, y, names]) => (
          <g key={s + x} transform={place(at(s, x, y))}>
            <circle r="8" fill={poiStyle[kind].disc} stroke="#fff" strokeOpacity=".8" />
            {poiStyle[kind].glyph}
            {names.map((n, i) => (
              <text key={n} y={19 + i * 12} fill={poiStyle[kind].text} className={`text-[11px] font-medium ${halo}`}>{n}</text>
            ))}
          </g>
        ))}
        <text transform={place(at("B", 140, 80))} y="4" fill="#4c4744" className={`text-[11px] font-medium ${halo}`}>구룡령</text>
        <text transform={place(at("E", 545, 555))} y="4" fill="#66687d" className={`text-[11px] font-medium ${halo}`}>옥계항</text>
        <text transform={`${place(at("C", 230, 375))} rotate(-14)`} y="3" fill="#a8702c" className="text-[11px] font-medium">영동고속</text>
        {[at("D", 722, 820), at("D", 1313, 917)].map((p) => (
          <text key={p[0]} transform={`${place(p)} rotate(7)`} y="4" fill="#58708f" className="text-[10px] font-medium">강릉항-울릉도(저동항)</text>
        ))}
      </g>
      {interchanges.map(([s, x, y, name]) => (
        <g key={s + x} transform={place(at(s, x, y))}>
          <circle r="6.500" fill={x === 1286 ? "#fff0b5" : "#fff"} stroke="#8b7f77" strokeWidth=".8" />
          <text y="3" textAnchor="middle" fill="#6a5b52" className="text-[7px] font-bold">IC</text>
          <text x="9" y="4" fill="#6d574b" strokeLinejoin="round" className={`text-[10px] font-bold ${halo}`}>{name}</text>
        </g>
      ))}
      <RoundShield pos={at("A", 563, 357)} no="59" />
      <RoundShield pos={at("C", 1372, 630)} no="35" />
      <RoundShield pos={at("E", 242, 963)} no="42" />
      <BoxShield pos={at("A", 725, 416)} no="418" />
      <BoxShield pos={at("C", 1183, 898)} no="410" />
      <HighwayShield pos={at("A", 1140, 922)} />
      <HighwayShield pos={at("E", 390, 288)} />

      <polyline points={flat(route)} fill="none" stroke="#f5765c" strokeOpacity=".85" strokeWidth="5" strokeLinejoin="round" />
      {approach.map((a, i) => (
        <path key={i} transform={`translate(${a.x} ${a.y}) rotate(${a.a})`} d="M-10-2L0-1.500-2-5 10 0-2 5 0 1.500-10 2Z" fill="#fff" stroke="#f0605a" strokeWidth=".9" />
      ))}
      {arrows.map((a, i) => (
        <path key={i} transform={`translate(${a.x} ${a.y}) rotate(${a.a})`} d="M-12-1L-2-3-5-5.500 11 0-5 5.500-2 3-12 2Z" fill="#4169b5" />
      ))}
      <path d="M0-7L2-3 7-5 4 0 8 3 3 3 4 8 0 4-3 8-3 3-9 4-5 0-8-5-2-3Z" transform={place(at("E", 482, 550))} fill="#4169b5" />

      <g transform={place(at("A", 1024, 503))}>
        <path d="M-18 2A18 18 0 1 1 18 2C17 12 8 16 4 36H-1C-4 24-17 14-18 2Z" fill="#7f7f7f" />
        <text y="3" textAnchor="middle" fill="#fff" className="text-[12px] font-bold">납품</text>
        <circle cx="14.500" cy="24" r="15" fill="#fff" fillOpacity=".6" />
        <path d="M2 20A14 14 0 0 0 10 37" fill="none" stroke="#5aa0f2" strokeWidth="3" />
        <circle cx="14.500" cy="24" r="12" fill="#7f7f7f" />
        <text x="14.500" y="28" textAnchor="middle" fill="#fff" className="text-[12px] font-bold">1</text>
      </g>
      <PlaceBalloon x={373} y={172} w={92} label="서울주유소" />

      <g>
        <polygon points={line("E 480,503 520,478 530,480 545,465 606,459 570,505 545,510 535,495")} fill="#3c5068" fillOpacity=".6" />
        <polygon points={line("E 461,411 549,411 549,505 540,505 540,476 461,476 477,443")} fill="#f8b500" />
        <text transform={place(at("E", 511, 443))} y="6" textAnchor="middle" fill="#fff" className="text-[16px] font-bold">S</text>
        <g transform={place(at("E", 551, 530))}>
          <circle r="8.500" fill="#fff" stroke="#5a6bd8" />
          <path d="M-4-6L0-3 5-6 0 7Z" fill="#1414f0" />
        </g>
      </g>
      <PlaceBalloon x={800} y={798} w={91} label="옥계저유소" />
    </svg>
  );
}

function ZoomControl() {
  return (
    <div className="absolute right-[9px] bottom-1 flex h-[219px] w-[30px] flex-col border border-[#444] bg-white">
      <button type="button" aria-label="확대" className="flex h-[23px] items-center justify-center border-b border-[#bbb]">
        <svg viewBox="0 0 10 10" className="size-2.5" stroke="#555" strokeWidth="2"><path d="M0 5h10M5 0v10" /></svg>
      </button>
      <div className="relative flex flex-1 flex-col items-center py-[7px]">
        <div className="w-1 flex-[98] bg-[#c9cdd1]" />
        <div className="flex h-3 w-5 items-center justify-center border border-[#333] bg-white">
          <div className="h-0.5 w-3 bg-[#ef4b4b]" />
        </div>
        <div className="w-1 flex-[47] bg-[#4287ef]" />
        <input type="range" aria-label="지도 확대 단계" min={1} max={14} defaultValue={5} className="absolute inset-0 size-full cursor-pointer opacity-0 [writing-mode:vertical-lr] [direction:rtl]" />
      </div>
      <button type="button" aria-label="축소" className="flex h-[23px] items-center justify-center border-t border-[#bbb]">
        <svg viewBox="0 0 10 10" className="size-2.5" stroke="#555" strokeWidth="2"><path d="M0 5h10" /></svg>
      </button>
    </div>
  );
}

function MapPanel() {
  return (
    <section className="flex min-w-0 flex-1 flex-col bg-white">
      <PanelTitle title="운행경로" grip />
      <div className="relative min-h-0 flex-1 overflow-hidden border-l border-[#d5d9dd]">
        <MapDrawing />
        <button type="button" className="absolute top-1.5 left-[5px] h-6 rounded-[3px] border border-[#767676] bg-[#efefef] px-2 text-[13px] text-black">
          교통상황
        </button>
        <div className="absolute top-[11px] right-[9px] flex h-[30px] border border-[#444] text-[13px]">
          <button type="button" className="w-10 border-r border-[#444] bg-[#4287ef] text-white">일반</button>
          <button type="button" className="w-[41px] bg-white text-black">위성</button>
        </div>
        <p className="absolute bottom-0 left-2.5 font-['Liberation_Sans'] text-[11px] leading-[14px] text-[#333]">© NAVER Corp.</p>
        <div className="absolute right-[11px] bottom-0.5 flex items-end gap-2.5">
          <span className="font-['Inter'] text-[12px] leading-[12px] font-black text-[#35c74e]">NAVER</span>
          <span className="block h-2 w-[81px] border-b-2 border-l-2 border-black">
            <span className="-mt-1 block pr-8 text-right text-[10px] leading-[10px] font-medium text-black">5km</span>
          </span>
        </div>
        <ZoomControl />
      </div>
    </section>
  );
}

/* ------------------------------------------------------------------ */
/* Page                                                               */
/* ------------------------------------------------------------------ */

export default function App() {
  return (
    <div lang="ko" className="flex h-screen flex-col overflow-hidden bg-[#ebecf1] font-['Noto_Sans_CJK_KR',sans-serif]">
      <Header />
      <main className="mx-[7px] ml-2.5 flex min-h-0 flex-1 flex-col border-x border-[#d9dbe0] pb-1.5">
        <div className="flex shrink-0 flex-col border-b border-[#d9dbe0] bg-white pt-px pb-[7px]">
          <Tabs />
          <SearchBar />
          <DispatchTable />
        </div>
        <div className="flex h-[11px] shrink-0 items-center justify-center">
          <div className="h-[3px] w-6 border-y border-dotted border-[#9db8d8]" />
        </div>
        <div className="flex min-h-0 flex-1 pl-px">
          <div className="flex min-w-0 flex-1 flex-col bg-white pb-0.5">
            <GridPanel first title="배차거점" columns={stopColumns} rows={stopRows} />
            <GridPanel title="계획경로" columns={legColumns} rows={[["1", "옥계저유소", "서울주유소", "11:29", "12:14", "00:45", "57 km"]]} />
            <GridPanel title="실행경로" columns={legColumns} rows={[["1", "옥계저유소", "옥계저유소", "09:24", "10:14", "00:49", "70 km"]]} />
          </div>
          <div className="flex w-[11px] shrink-0 items-center justify-center">
            <div className="h-6 w-[3px] border-x border-dotted border-[#9db8d8]" />
          </div>
          <MapPanel />
        </div>
      </main>
    </div>
  );
}
